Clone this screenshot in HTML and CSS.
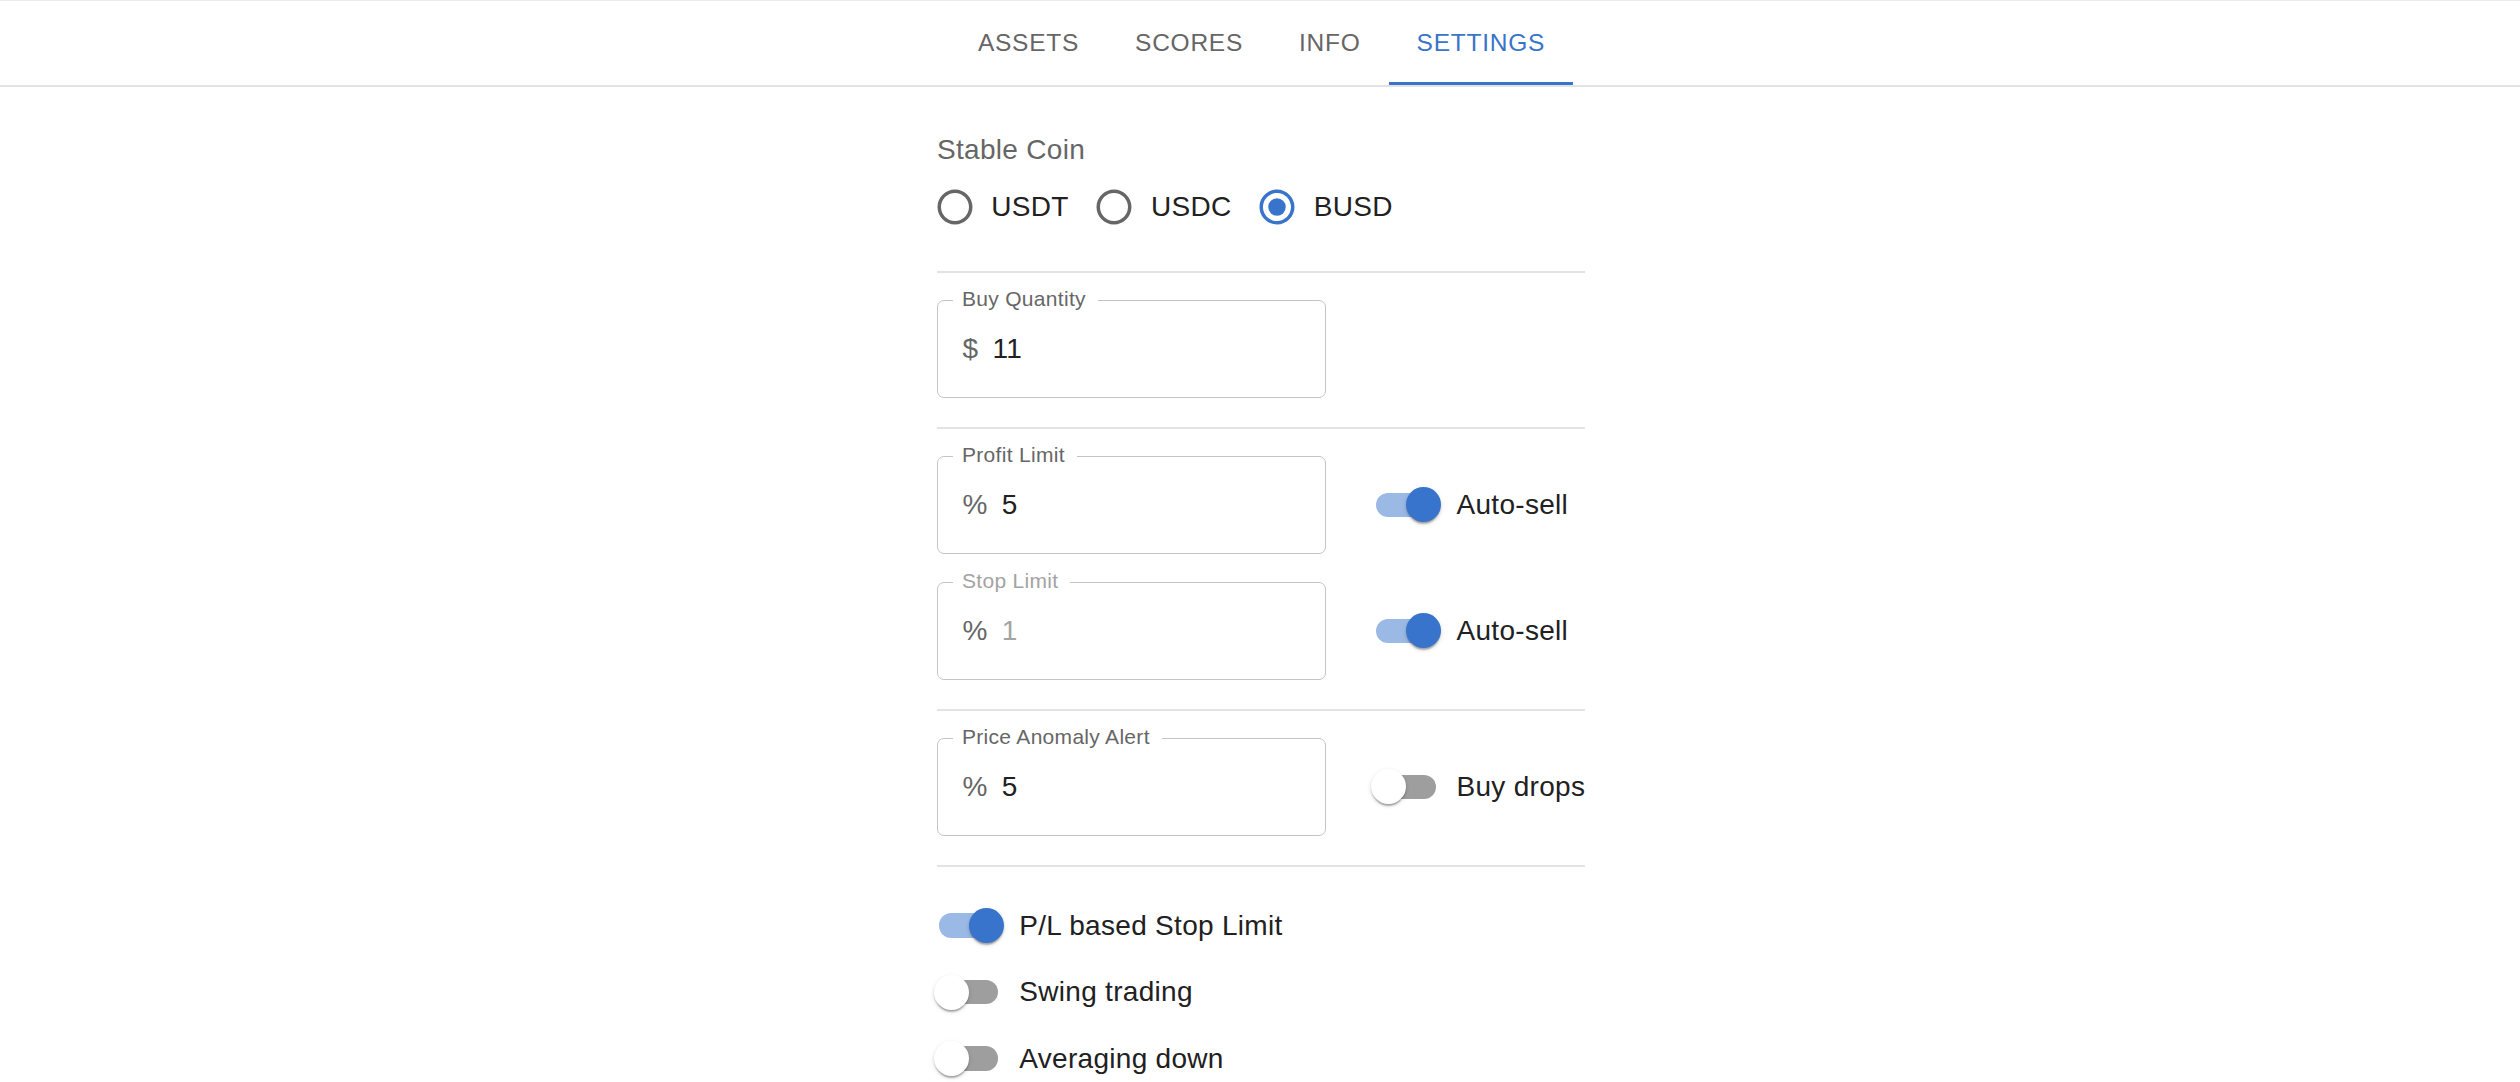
FILE: index.html
```html
<!DOCTYPE html>
<html lang="en">
<head>
<meta charset="utf-8">
<title>Settings</title>
<link rel="stylesheet" href="styles.css">
</head>
<body>
<header class="tabbar">
  <nav class="tabs">
    <a class="tab">Assets</a>
    <a class="tab">Scores</a>
    <a class="tab">Info</a>
    <a class="tab active">Settings</a>
  </nav>
</header>

<main class="settings">
  <section class="coin">
    <div class="group-label">Stable Coin</div>
    <div class="radios">
      <label class="radio-label">
        <span class="radio"><svg viewBox="0 0 24 24"><path class="ring" d="M12 2C6.48 2 2 6.48 2 12s4.48 10 10 10 10-4.48 10-10S17.52 2 12 2zm0 18c-4.42 0-8-3.58-8-8s3.58-8 8-8 8 3.58 8 8-3.58 8-8 8z"/></svg></span>
        <span>USDT</span>
      </label>
      <label class="radio-label">
        <span class="radio"><svg viewBox="0 0 24 24"><path class="ring" d="M12 2C6.48 2 2 6.48 2 12s4.48 10 10 10 10-4.48 10-10S17.52 2 12 2zm0 18c-4.42 0-8-3.58-8-8s3.58-8 8-8 8 3.58 8 8-3.58 8-8 8z"/></svg></span>
        <span>USDC</span>
      </label>
      <label class="radio-label">
        <span class="radio checked"><svg viewBox="0 0 24 24"><path class="ring" d="M12 2C6.48 2 2 6.48 2 12s4.48 10 10 10 10-4.48 10-10S17.52 2 12 2zm0 18c-4.42 0-8-3.58-8-8s3.58-8 8-8 8 3.58 8 8-3.58 8-8 8z"/><circle class="dot" cx="12" cy="12" r="5"/></svg></span>
        <span>BUSD</span>
      </label>
    </div>
  </section>

  <hr class="divider">

  <section class="fields">
    <div class="field-row">
      <div class="outlined">
        <span class="legend">Buy Quantity</span>
        <span class="adorn">$</span><span class="value">11</span>
      </div>
    </div>
  </section>

  <hr class="divider">

  <section class="fields">
    <div class="field-row">
      <div class="outlined">
        <span class="legend">Profit Limit</span>
        <span class="adorn">%</span><span class="value">5</span>
      </div>
      <label class="toggle">
        <span class="switch on"><span class="track"></span><span class="thumb"></span></span>
        <span class="toggle-text">Auto-sell</span>
      </label>
    </div>
    <div class="field-row">
      <div class="outlined">
        <span class="legend dim">Stop Limit</span>
        <span class="adorn">%</span><span class="value dim">1</span>
      </div>
      <label class="toggle">
        <span class="switch on"><span class="track"></span><span class="thumb"></span></span>
        <span class="toggle-text">Auto-sell</span>
      </label>
    </div>
  </section>

  <hr class="divider">

  <section class="fields">
    <div class="field-row">
      <div class="outlined">
        <span class="legend">Price Anomaly Alert</span>
        <span class="adorn">%</span><span class="value">5</span>
      </div>
      <label class="toggle">
        <span class="switch"><span class="track"></span><span class="thumb"></span></span>
        <span class="toggle-text">Buy drops</span>
      </label>
    </div>
  </section>

  <hr class="divider">

  <section class="toggles">
    <label class="toggle-row">
      <span class="switch on"><span class="track"></span><span class="thumb"></span></span>
      <span class="toggle-text">P/L based Stop Limit</span>
    </label>
    <label class="toggle-row">
      <span class="switch"><span class="track"></span><span class="thumb"></span></span>
      <span class="toggle-text">Swing trading</span>
    </label>
    <label class="toggle-row">
      <span class="switch"><span class="track"></span><span class="thumb"></span></span>
      <span class="toggle-text">Averaging down</span>
    </label>
  </section>
</main>
</body>
</html>
```

FILE: styles.css
```css
html {
  overflow: hidden;
}

body {
  margin: 0;
  background: #fff;
  font-family: "Liberation Sans", Arial, Helvetica, sans-serif;
  color: #212121;
}

/* ---------- tabs ---------- */
.tabbar {
  border-top: 1px solid #ececec;
  border-bottom: 2px solid #e3e3e3;
  display: flex;
  justify-content: center;
}

.tabs {
  display: flex;
  margin-left: 3px;
}

.tab {
  position: relative;
  height: 84px;
  padding: 0 28px;
  display: flex;
  align-items: center;
  font-size: 24.5px;
  letter-spacing: 0.75px;
  text-transform: uppercase;
  color: #666;
  cursor: pointer;
}

.tab.active {
  color: #3874cb;
}

.tab.active::after {
  content: "";
  position: absolute;
  left: 0;
  right: 0;
  bottom: 0;
  height: 3.5px;
  background: #3874cb;
}

/* ---------- content ---------- */
.settings {
  width: 648px;
  margin-left: calc(50% - 323px);
  padding-top: 42.5px;
  letter-spacing: 0.3px;
}

.coin {
  padding-bottom: 27.5px;
}

.group-label {
  font-size: 28px;
  line-height: 40.25px;
  color: #666;
}

.radios {
  display: flex;
}

.radio-label {
  display: flex;
  align-items: center;
  margin-left: -19.25px;
  margin-right: 28px;
  font-size: 28px;
  color: #212121;
}

.radio {
  width: 73.5px;
  height: 73.5px;
  display: flex;
  align-items: center;
  justify-content: center;
  flex: none;
}

.radio svg {
  width: 42px;
  height: 42px;
  display: block;
}

.radio .ring {
  fill: #666;
}

.radio.checked .ring,
.radio.checked .dot {
  fill: #3874cb;
}

.divider {
  border: 0;
  height: 2px;
  margin: 0;
  background: #e3e3e3;
}

.fields {
  padding: 27px 0 29px;
  display: flex;
  flex-direction: column;
  gap: 28px;
}

.field-row {
  display: flex;
  align-items: center;
}

.outlined {
  position: relative;
  box-sizing: border-box;
  width: 389px;
  height: 98px;
  border: 1px solid #c4c4c4;
  border-radius: 7px;
  padding: 0 24.5px;
  display: flex;
  align-items: center;
  font-size: 28px;
  flex: none;
}

.legend {
  position: absolute;
  left: 15px;
  top: -13px;
  padding: 0 12px 0 9px;
  background: #fff;
  font-size: 21px;
  line-height: 21px;
  color: #666;
  white-space: nowrap;
}

.legend.dim {
  color: #a3a3a3;
}

.adorn {
  color: #666;
  margin-right: 14px;
}

.value {
  color: #212121;
}

.value.dim {
  color: #a3a3a3;
}

/* ---------- switches ---------- */
.toggle {
  display: flex;
  align-items: center;
  flex: none;
  margin-left: 29px;
  font-size: 28px;
  color: #212121;
}

.toggle-text {
  white-space: nowrap;
}

.switch {
  position: relative;
  width: 101.5px;
  height: 66.5px;
  flex: none;
}

.track {
  position: absolute;
  left: 21px;
  top: 21px;
  width: 59.5px;
  height: 24.5px;
  border-radius: 12.25px;
  background: #000;
  opacity: 0.38;
}

.thumb {
  position: absolute;
  left: 15.75px;
  top: 15.75px;
  width: 35px;
  height: 35px;
  border-radius: 50%;
  background: #fff;
  box-shadow: 0 3.5px 1.75px -1.75px rgba(0, 0, 0, 0.2),
              0 1.75px 1.75px 0 rgba(0, 0, 0, 0.14),
              0 1.75px 5.25px 0 rgba(0, 0, 0, 0.12);
}

.switch.on .track {
  background: #3874cb;
  opacity: 0.5;
}

.switch.on .thumb {
  left: 50.75px;
  background: #3874cb;
}

.toggles {
  padding-top: 25.5px;
}

.toggle-row {
  display: flex;
  align-items: center;
  margin-left: -19.25px;
  font-size: 28px;
  color: #212121;
}
```
